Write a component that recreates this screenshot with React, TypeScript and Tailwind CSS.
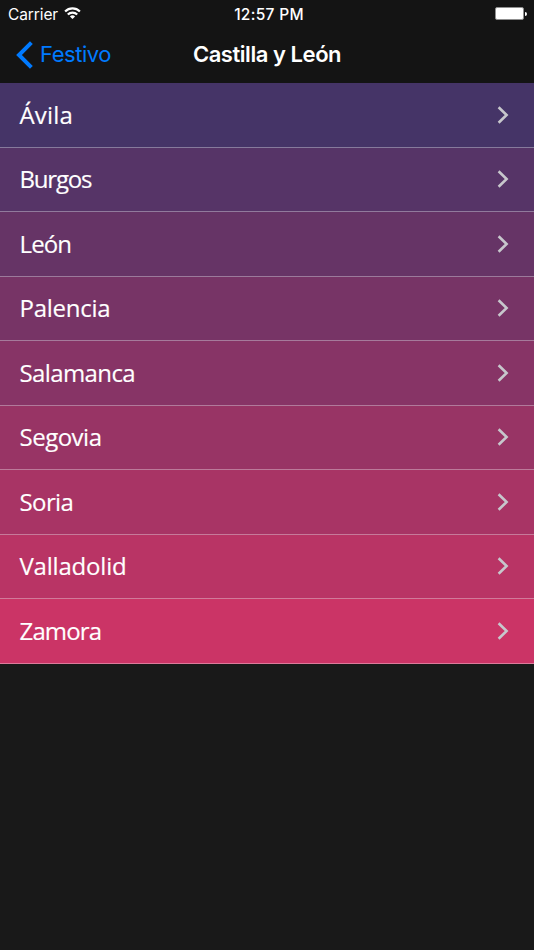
const provinces = [
  { name: "Ávila", style: "bg-[#453467] tracking-[0.15px]" },
  { name: "Burgos", style: "bg-[#563467] tracking-[-1.2px]" },
  { name: "León", style: "bg-[#663466] tracking-[-0.9px]" },
  { name: "Palencia", style: "bg-[#773466] tracking-[-0.25px]" },
  { name: "Salamanca", style: "bg-[#873466] tracking-[-0.6px]" },
  { name: "Segovia", style: "bg-[#983465] tracking-[-0.5px]" },
  { name: "Soria", style: "bg-[#a83465] tracking-[-0.6px]" },
  { name: "Valladolid", style: "bg-[#b93465] tracking-[-0.2px]" },
  { name: "Zamora", style: "bg-[#cb3466] tracking-[-0.85px]" },
];

function WifiIcon() {
  return (
    <svg
      className="-mt-0.5"
      width="17"
      height="13"
      viewBox="0 0 17 13"
      fill="none"
      stroke="#fff"
      strokeWidth="2.2"
    >
      <path d="M1.1 4.5a10.4 10.4 0 0 1 14.8 0" />
      <path d="M3.8 7.5a6.6 6.6 0 0 1 9.4 0" />
      <path d="M8.5 12 5.9 9.6a3.6 3.6 0 0 1 5.2 0z" fill="#fff" stroke="none" />
    </svg>
  );
}

function StatusBar() {
  return (
    <div className="grid h-7 grid-cols-3 items-center pl-2 pr-[7px] text-[15.5px] leading-7">
      <div className="-mt-px flex items-center gap-[6px]">
        <span className="pt-0.5 tracking-[-0.1px]">Carrier</span>
        <WifiIcon />
      </div>
      <span className="pt-px pl-[3px] text-center font-medium tracking-[0.3px] whitespace-nowrap">12:57 PM</span>
      <div className="-mt-0.5 flex items-center justify-end gap-px">
        <div className="h-[13px] w-[29px] rounded-[2px] border border-[#8f8f8f] bg-white" />
        <div className="h-[4px] w-[2px] rounded-r-full bg-white" />
      </div>
    </div>
  );
}

function NavBar() {
  return (
    <div className="grid h-[55px] grid-cols-[1fr_auto_1fr] items-center text-[22px] leading-[53px]">
      <button className="-mt-0.5 flex items-center gap-[7px] pl-4 text-[#007aff]">
        <svg width="17" height="28" viewBox="0 0 17 28" fill="none" stroke="currentColor" strokeWidth="4">
          <path d="M15.4 1.7 3 14l12.4 12.3" />
        </svg>
        <span className="tracking-[-0.45px]">Festivo</span>
      </button>
      <h1 className="-mt-0.5 font-semibold tracking-[-0.45px]">Castilla y León</h1>
    </div>
  );
}

export default function App() {
  return (
    <div className="h-[950px] w-full overflow-hidden bg-[#191919] font-['Inter',sans-serif] text-white">
      <header className="h-[83px] bg-[#141414]">
        <StatusBar />
        <NavBar />
      </header>
      <ul className="font-['Open_Sans',sans-serif] text-2xl [-webkit-text-stroke:0.15px_#fff]">
        {provinces.map((province) => (
          <li
            key={province.name}
            className={`flex h-[64.5px] items-center justify-between border-b border-white/35 pl-[19.5px] pr-[25px] ${province.style}`}
          >
            <span>{province.name}</span>
            <svg width="12" height="18" viewBox="0 0 12 18" fill="none" stroke="#c7c7cc" strokeWidth="2.6">
              <path d="M1.6 1.2 9.6 9l-8 7.8" />
            </svg>
          </li>
        ))}
      </ul>
    </div>
  );
}
